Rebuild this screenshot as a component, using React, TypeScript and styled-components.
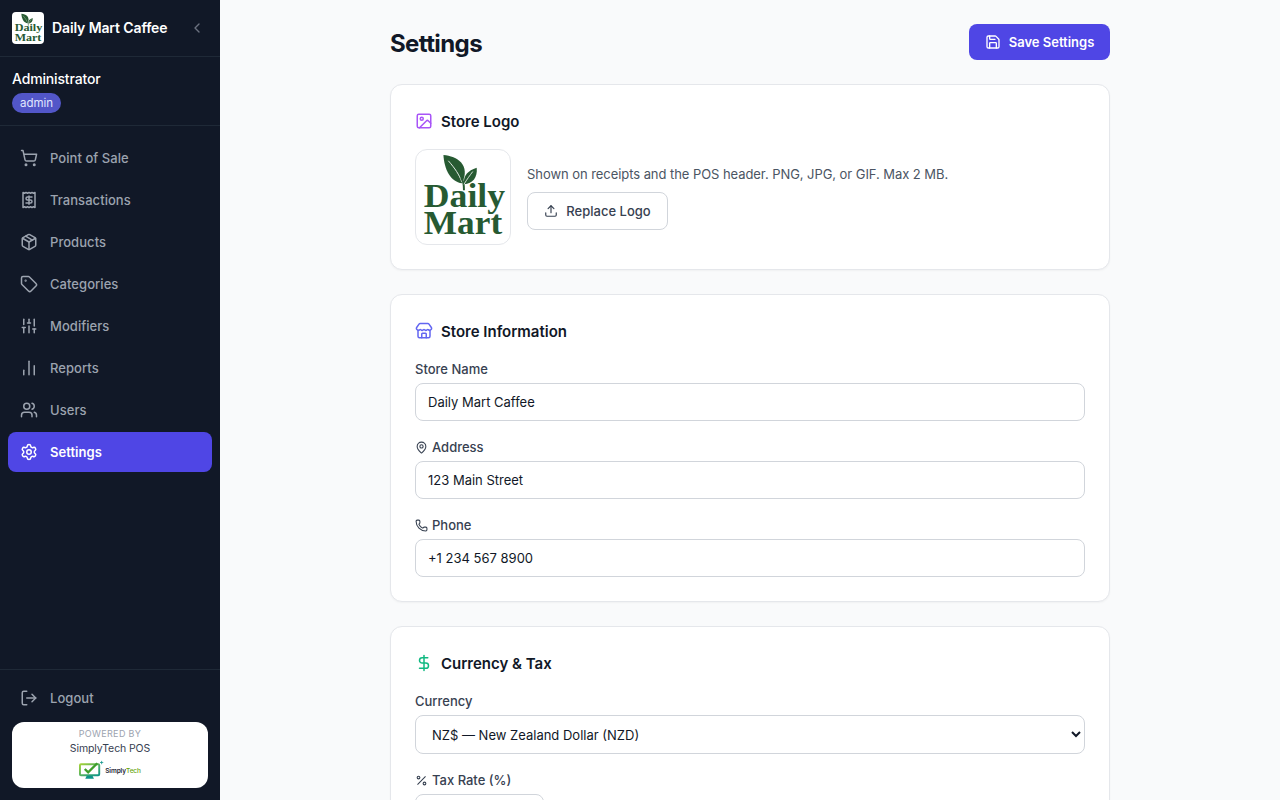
import React from "react";
import styled, { createGlobalStyle } from "styled-components";
import {
  ShoppingCart, Receipt, Package, Tag, SlidersVertical, ChartNoAxesColumn, Users, Settings,
  LogOut, ChevronLeft, Save, Image as ImageIcon, Upload, Store, MapPin, Phone, DollarSign, Percent,
} from "lucide-react";

const FONT = `Inter, "Noto Sans", sans-serif`;

const Global = createGlobalStyle`
  * { box-sizing: border-box; }
  html, body { margin: 0; height: 100%; overflow: hidden; }
  body { font-family: ${FONT}; background: #f9fafb; color: #111827; }
`;

const Shell = styled.div`display: flex; height: 100vh; overflow: hidden;`;
const Sidebar = styled.aside`
  width: 220px; flex: none; background: #111827; display: flex; flex-direction: column; color: #fff;
`;
const Brand = styled.div`
  height: 57px; flex: none; border-bottom: 1px solid #1f2937; display: flex; align-items: center;
  padding: 0 12px; gap: 8px;
`;
const BrandName = styled.span`font-size: 14px; font-weight: 600; line-height: 20px; flex: 1; letter-spacing: -0.12px;`;
const Collapse = styled.button`
  border: 0; background: none; padding: 0; width: 16px; height: 16px; margin-right: 3px; color: #6b7280; display: flex;
`;
const UserBox = styled.div`
  height: 69px; flex: none; border-bottom: 1px solid #1f2937; padding: 12px 12px 0;
`;
const UserName = styled.div`font-size: 14px; font-weight: 500; line-height: 20px; letter-spacing: -0.15px;`;
const Role = styled.span`
  display: inline-block; margin-top: 4px; height: 20px; padding: 0 8px; border-radius: 999px;
  background: rgba(99, 102, 241, 0.8); color: #e0e7ff; font-size: 11.5px; line-height: 20px;
`;
const Nav = styled.nav`flex: 1; padding: 12px 8px; display: flex; flex-direction: column; gap: 2px;`;
const NavItem = styled.a<{ $active?: boolean }>`
  height: 40px; border-radius: 8px; display: flex; align-items: center; gap: 12px; padding: 0 12px;
  font-size: 13px; letter-spacing: 0.05px; font-weight: ${p => (p.$active ? 600 : 500)};
  color: ${p => (p.$active ? "#fff" : "#9ca3af")};
  background: ${p => (p.$active ? "#4f46e5" : "transparent")};
  svg { width: 18px; height: 18px; flex: none; }
`;
const SideFoot = styled.div`border-top: 1px solid #1f2937; padding: 8px 8px 12px; flex: none;`;
const Powered = styled.div`
  margin: 4px 4px 0; height: 66px; background: #fff; border-radius: 12px; display: flex; flex-direction: column;
  align-items: center; padding-top: 6px;
`;
const PoweredSmall = styled.div`font-size: 9px; letter-spacing: 0.35px; line-height: 11px; color: #9ca3af;`;
const PoweredName = styled.div`font-size: 10.5px; letter-spacing: -0.1px; line-height: 15px; margin-top: 2px; color: #374151;`;
const PoweredLogo = styled.div`display: flex; align-items: center; gap: 0; margin-top: 4px;`;
const PoweredMark = styled.span`
  font-size: 6.5px; font-weight: 600; color: #1f2937; letter-spacing: -0.1px; margin-top: 2px;
  em { font-style: normal; color: #65a30d; font-weight: 500; }
`;

const Main = styled.main`flex: 1; min-width: 0; overflow: hidden; padding: 24px 0;`;
const Column = styled.div`width: 720px; margin: 0 auto; display: flex; flex-direction: column; gap: 24px;`;
const TopBar = styled.div`display: flex; justify-content: space-between; align-items: center; height: 36px;`;
const Title = styled.h1`margin: 4px 0 0; font-size: 24px; font-weight: 700; line-height: 32px; letter-spacing: -0.6px; color: #111827;`;
const SaveButton = styled.button`
  height: 36px; width: 141px; border: 0; border-radius: 8px; background: #4f46e5; color: #fff; font: 600 13px ${FONT};
  display: flex; align-items: center; justify-content: center; gap: 8px;
`;
const Card = styled.section`
  background: #fff; border: 1px solid #e5e7eb; border-radius: 12px; padding: 24px;
  display: flex; flex-direction: column; box-shadow: 0 1px 2px rgba(0,0,0,0.04);
`;
const CardTitle = styled.h2`
  margin: 0 0 16px; display: flex; align-items: center; gap: 8px; height: 24px; font-size: 15px; line-height: 20px; font-weight: 600; color: #111827;
`;
const CardTitleText = styled.span`padding-top: 2px;`;
const LogoRow = styled.div`display: flex; align-items: center; gap: 16px;`;
const LogoBox = styled.div`
  width: 96px; height: 96px; border: 1px solid #e5e7eb; border-radius: 12px; background: #fff; flex: none; overflow: hidden;
`;
const BrandLogo = styled.div`
  width: 32px; height: 32px; background: #fff; border-radius: 4px; flex: none; overflow: hidden;
`;
const LogoInfo = styled.div`display: flex; flex-direction: column; align-items: flex-start; gap: 8px;`;
const Hint = styled.p`margin: 0; font-size: 13px; letter-spacing: -0.06px; line-height: 20px; color: #4b5563;`;
const GhostButton = styled.button`
  height: 38px; width: 141px; border: 1px solid #d1d5db; border-radius: 8px; background: #fff; color: #374151;
  font: 500 13px ${FONT}; display: flex; align-items: center; justify-content: center; gap: 8px;
`;
const Fields = styled.div`display: flex; flex-direction: column; gap: 16px;`;
const Field = styled.div`display: flex; flex-direction: column; gap: 4px;`;
const Label = styled.label`
  display: flex; align-items: center; gap: 4px; font-size: 13px; line-height: 20px; font-weight: 500; color: #374151;
`;
const Input = styled.input<{ $w?: number }>`
  height: 38px; width: ${p => (p.$w ? `${p.$w}px` : "100%")}; border: 1px solid #d1d5db; border-radius: 8px; padding: 0 12px;
  font: 400 13px ${FONT}; color: #111827; background: #fff; outline: none;
`;
const Select = styled.select`
  height: 39px; width: 100%; border: 1px solid #d1d5db; border-radius: 8px; padding: 0 12px;
  font: 400 13px ${FONT}; color: #111827; background: #fff; outline: none;
`;

function Logo() {
  return (
    <svg viewBox="0 0 96 96" width="100%" height="100%">
      <path d="M28 5 C42 6 56 15 47 34 C35 32 29 20 28 5 Z" fill="#275a32" />
      <path d="M33 11 C40 19 44 25 47 33" stroke="#fff" strokeWidth="0.9" fill="none" />
      <path d="M46 28 C49 32 49 36 49 41" stroke="#275a32" strokeWidth="2" fill="none" />
      <path d="M62 18 C63 28 58 34 49 35 C48 26 53 21 62 18 Z" fill="#275a32" />
      <path d="M58 22 C55 26 52 30 49 35" stroke="#fff" strokeWidth="0.8" fill="none" />
      <text x="49.5" y="58" textAnchor="middle" fontFamily="'Liberation Serif', serif" fontWeight="700" fontSize="34" fill="#275a32" textLength="83" lengthAdjust="spacingAndGlyphs">Daily</text>
      <text x="48" y="86" textAnchor="middle" fontFamily="'Liberation Serif', serif" fontWeight="700" fontSize="34" fill="#275a32" textLength="80" lengthAdjust="spacingAndGlyphs">Mart</text>
    </svg>
  );
}

function SimplyMark() {
  return (
    <svg width="26" height="20" viewBox="0 0 27 20">
      <defs>
        <linearGradient id="stg" x1="0" y1="0" x2="1" y2="1">
          <stop offset="0" stopColor="#a3d139" />
          <stop offset="1" stopColor="#0d9488" />
        </linearGradient>
      </defs>
      <rect x="1" y="4" width="20" height="11.5" rx="1" fill="#fff" stroke="url(#stg)" strokeWidth="2" />
      <path d="M8 16h6l1.5 3h-9z" fill="#0d9488" />
      <path d="M6 9l3.5 3.5L19 3" fill="none" stroke="#3f9e2a" strokeWidth="2.4" />
      <path d="M23.5 0.5v3.5M21.8 2.2h3.4" stroke="#0d9488" strokeWidth="0.8" />
    </svg>
  );
}

const navItems = [
  { label: "Point of Sale", Icon: ShoppingCart },
  { label: "Transactions", Icon: Receipt },
  { label: "Products", Icon: Package },
  { label: "Categories", Icon: Tag },
  { label: "Modifiers", Icon: SlidersVertical },
  { label: "Reports", Icon: ChartNoAxesColumn },
  { label: "Users", Icon: Users },
  { label: "Settings", Icon: Settings, active: true },
];

export default function App() {
  return (
    <Shell>
      <Global />
      <Sidebar>
        <Brand>
          <BrandLogo><Logo /></BrandLogo>
          <BrandName>Daily Mart Caffee</BrandName>
          <Collapse><ChevronLeft size={16} /></Collapse>
        </Brand>
        <UserBox>
          <UserName>Administrator</UserName>
          <Role>admin</Role>
        </UserBox>
        <Nav>
          {navItems.map(({ label, Icon, active }) => (
            <NavItem key={label} $active={active}><Icon />{label}</NavItem>
          ))}
        </Nav>
        <SideFoot>
          <NavItem><LogOut />Logout</NavItem>
          <Powered>
            <PoweredSmall>POWERED BY</PoweredSmall>
            <PoweredName>SimplyTech POS</PoweredName>
            <PoweredLogo><SimplyMark /><PoweredMark>Simply<em>Tech</em></PoweredMark></PoweredLogo>
          </Powered>
        </SideFoot>
      </Sidebar>
      <Main>
        <Column>
          <TopBar>
            <Title>Settings</Title>
            <SaveButton><Save size={16} />Save Settings</SaveButton>
          </TopBar>
          <Card>
            <CardTitle><ImageIcon size={18} color="#a855f7" /><CardTitleText>Store Logo</CardTitleText></CardTitle>
            <LogoRow>
              <LogoBox><Logo /></LogoBox>
              <LogoInfo>
                <Hint>Shown on receipts and the POS header. PNG, JPG, or GIF. Max 2 MB.</Hint>
                <GhostButton><Upload size={14} />Replace Logo</GhostButton>
              </LogoInfo>
            </LogoRow>
          </Card>
          <Card>
            <CardTitle><Store size={18} color="#6366f1" /><CardTitleText>Store Information</CardTitleText></CardTitle>
            <Fields>
              <Field>
                <Label>Store Name</Label>
                <Input readOnly value="Daily Mart Caffee" />
              </Field>
              <Field>
                <Label><MapPin size={13} />Address</Label>
                <Input readOnly value="123 Main Street" />
              </Field>
              <Field>
                <Label><Phone size={13} />Phone</Label>
                <Input readOnly value="+1 234 567 8900" />
              </Field>
            </Fields>
          </Card>
          <Card>
            <CardTitle><DollarSign size={18} color="#10b981" /><CardTitleText>Currency &amp; Tax</CardTitleText></CardTitle>
            <Fields>
              <Field>
                <Label>Currency</Label>
                <Select defaultValue="NZD">
                  <option value="NZD">NZ$ — New Zealand Dollar (NZD)</option>
                </Select>
              </Field>
              <Field>
                <Label><Percent size={13} />Tax Rate (%)</Label>
                <Input $w={129} readOnly value="15" />
              </Field>
            </Fields>
          </Card>
        </Column>
      </Main>
    </Shell>
  );
}
